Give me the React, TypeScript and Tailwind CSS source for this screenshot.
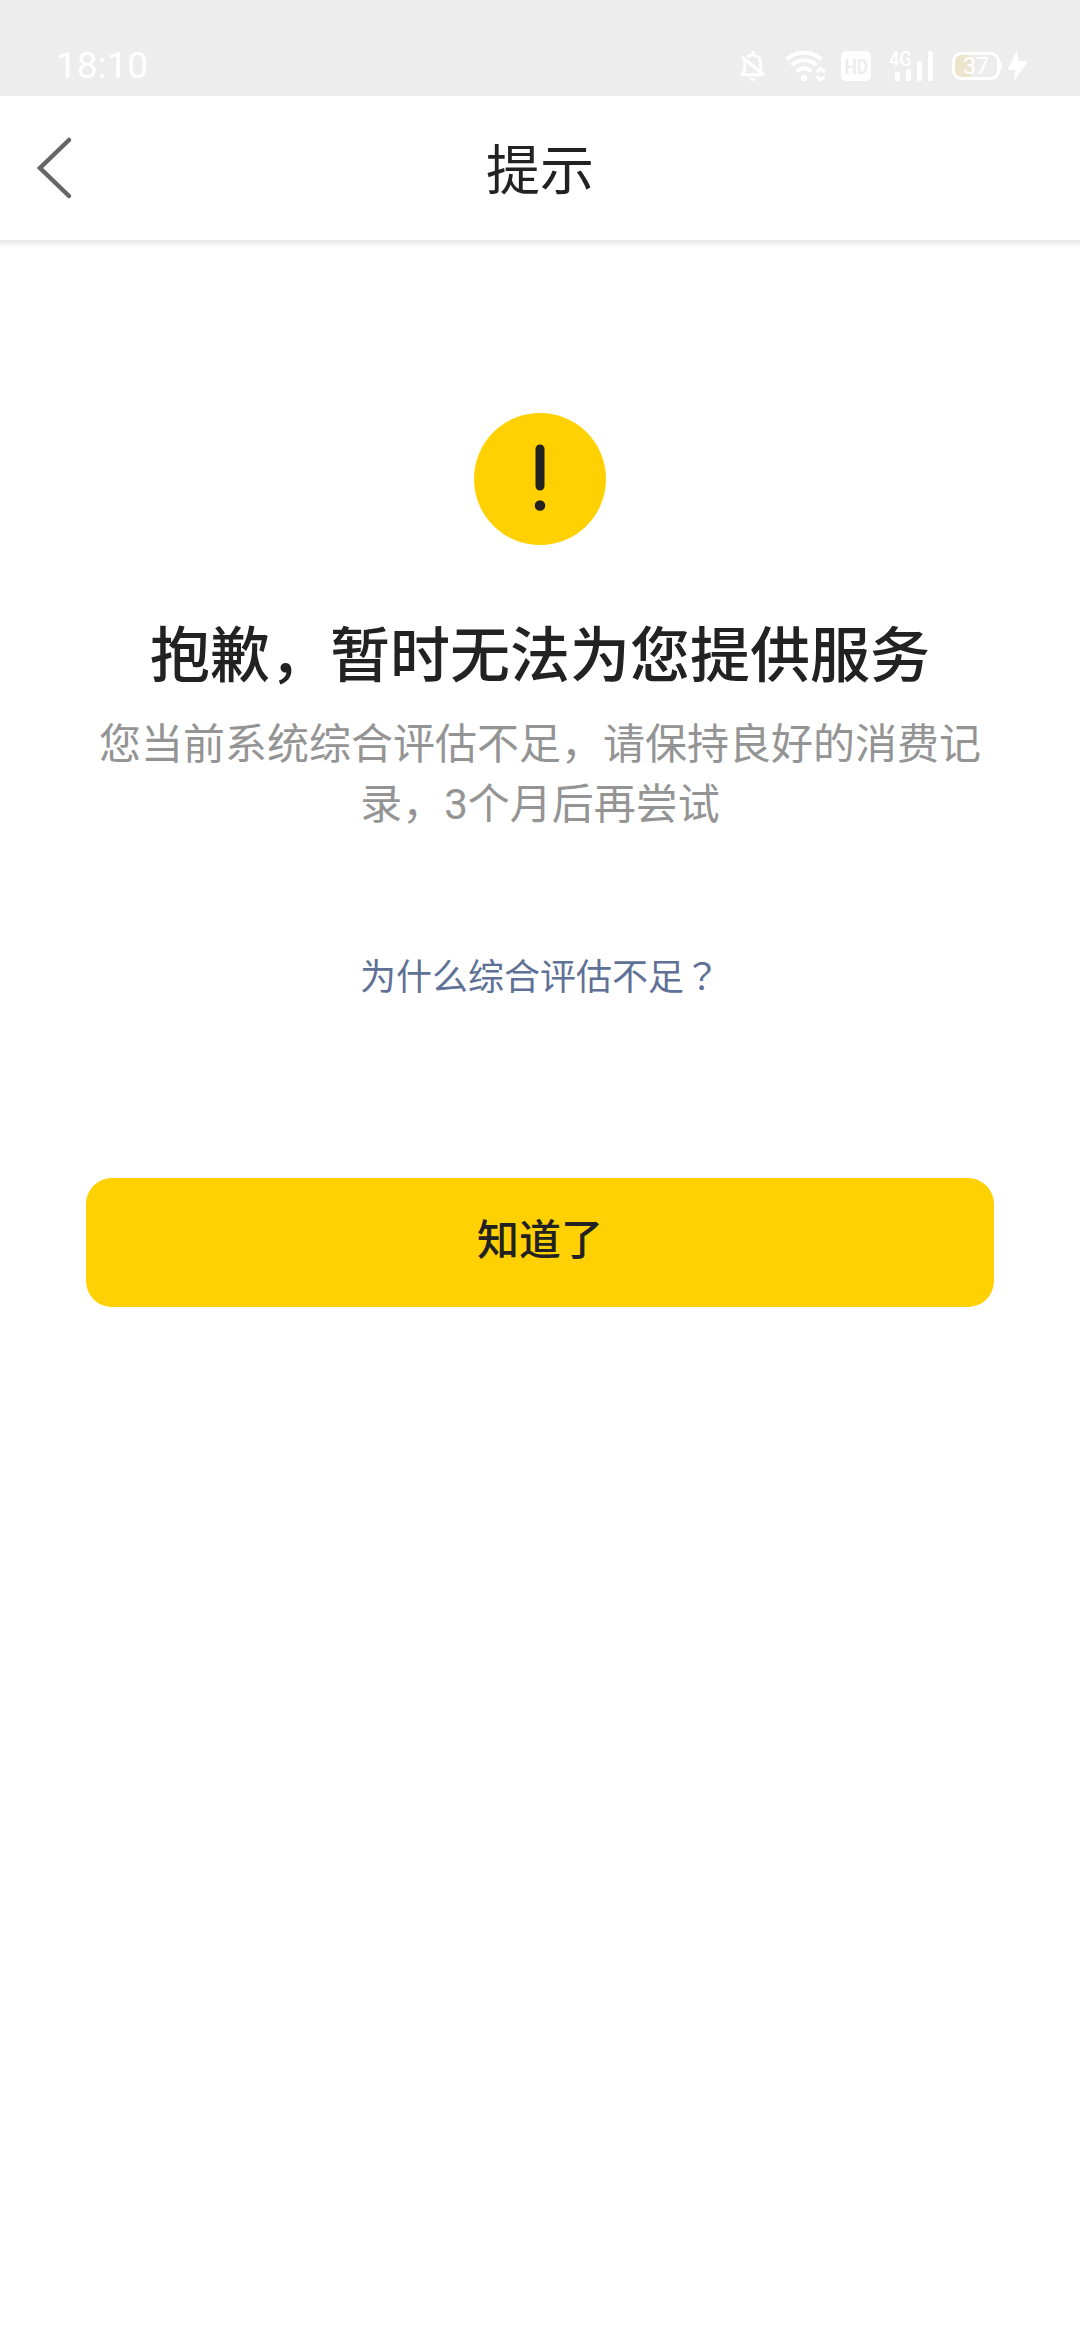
function BellOffIcon() {
    return (
        <svg className="h-[30px] w-[25px]" viewBox="0 0 25 30" fill="none" stroke="#fff" strokeWidth="3">
            <path d="M7 6.500C8.800 4.500 10.500 4 12.800 4c4.500 0 8 3.200 8 8v7" />
            <path d="M4.800 10v9.500L2 23v.8h19" />
            <path d="M2 6l22 18" />
            <path d="M13 0v4" />
            <path d="M9.500 27H16c-.5 2-1.800 3-3.200 3s-2.800-1-3.300-3z" fill="#fff" stroke="none" />
        </svg>
    );
}

function WifiIcon() {
    return (
        <svg className="h-[30px] w-[40px]" viewBox="0 0 40 30" fill="none" stroke="#fff" strokeWidth="4">
            <path d="M1.500 8C12.500-.3 25.500-.3 36.500 8" />
            <path d="M6.500 14.300c8-6.600 17-6.600 25 0" />
            <path d="M11.500 20.500c5-4.400 10-4.400 15 0" />
            <circle cx="19" cy="27" r="3.2" fill="#fff" stroke="none" />
            <path d="M31.800 21.200l4-3.700 4 3.700M31.800 25.300l4 3.700 4-3.700" strokeWidth="3" />
        </svg>
    );
}

function HdIcon() {
    return (
        <svg className="size-[30px] overflow-visible" viewBox="0 0 30 30">
            <rect width="30" height="30" rx="5" fill="#fff" />
            <text x="3.5" y="22.5" fontSize="21" fontWeight="700" fontFamily="Roboto, sans-serif" textLength="23.5" lengthAdjust="spacingAndGlyphs" fill="#ededed">HD</text>
        </svg>
    );
}

function SignalIcon() {
    return (
        <svg className="h-[30px] w-[44px] overflow-visible" viewBox="0 0 44 30" fill="#fff">
            <text x="0" y="14.5" fontSize="19.5" fontWeight="500" fontFamily="Roboto, sans-serif" textLength="22.5" lengthAdjust="spacingAndGlyphs">4G</text>
            <rect x="6" y="20.5" width="5" height="9.5" rx="1.5" />
            <rect x="17" y="18" width="5" height="12" rx="1.5" />
            <rect x="28" y="10" width="5" height="20" rx="1.5" />
            <rect x="39" y="0" width="5" height="30" rx="1.5" />
        </svg>
    );
}

function BatteryIcon() {
    return (
        <svg className="h-[30px] w-[50px] overflow-visible" viewBox="0 0 50 30">
            <path d="M9.500 3H19v24H9.500A7 7 0 0 1 3 20V10a7 7 0 0 1 6.500-7z" fill="#ece5cc" />
            <rect x="1.5" y="2.5" width="45" height="25" rx="8" fill="none" stroke="#fff" strokeWidth="3" />
            <path d="M47 10c4 1.500 4 9 0 10.500z" fill="#fff" />
            <text x="24" y="23" fontSize="23" fontFamily="Roboto, sans-serif" textAnchor="middle" fill="#fff">37</text>
        </svg>
    );
}

function BoltIcon() {
    return (
        <svg className="h-[30px] w-[19px]" viewBox="0 0 19 30" fill="#fff">
            <path d="M9 0L0 17.500c-.3.800 0 1.500 1 1.500h6.500L6 30l13-18.500c.3-.800 0-1.500-1-1.500h-7.500z" />
        </svg>
    );
}

function StatusBar() {
    return (
        <div className="flex h-24 items-start justify-between bg-[#ededed] pl-14 pr-[53px] text-white">
            <span className="mt-[46px] font-[Roboto] text-[37px] leading-[40px]">18:10</span>
            <div className="mt-[51px] flex">
                <BellOffIcon />
                <div className="ml-5"><WifiIcon /></div>
                <div className="ml-4"><HdIcon /></div>
                <div className="ml-[18px]"><SignalIcon /></div>
                <div className="ml-[19px]"><BatteryIcon /></div>
                <div className="ml-[6px]"><BoltIcon /></div>
            </div>
        </div>
    );
}

function Header() {
    return (
        <header className="grid h-36 grid-cols-[1fr_auto_1fr] items-center bg-white">
            <button className="ml-9 w-10">
                <svg className="h-[64px] w-[40px]" viewBox="0 0 40 64" fill="none" stroke="#666" strokeWidth="4.5" strokeLinecap="round">
                    <path d="M33 4L4 32l29 28" />
                </svg>
            </button>
            <h1 className="pb-0.5 text-[54px] leading-[80px]">提示</h1>
        </header>
    );
}

export default function App() {
    return (
        <div className="flex h-[2340px] w-[1080px] flex-col bg-white font-['Noto_Sans_CJK_SC',sans-serif] text-[#222]">
            <StatusBar />
            <Header />
            <div className="h-2 bg-linear-to-b from-[#e8e8e8] to-white" />

            <main className="flex flex-col items-center px-[86px] pt-[165px] text-center">
                <svg className="size-[132px]" viewBox="0 0 132 132">
                    <circle cx="66" cy="66" r="66" fill="#ffd103" />
                    <rect x="61.5" y="31.5" width="9" height="46" rx="4.5" fill="#222" />
                    <circle cx="66" cy="92.5" r="5.3" fill="#222" />
                </svg>
                <h2 className="mt-[61px] text-[60px] font-medium leading-[90px]">抱歉，暂时无法为您提供服务</h2>
                <p className="mt-[15px] text-[42px] leading-[60px] text-[#949494]">
                    您当前系统综合评估不足，请保持良好的消费记
                    <br />
                    录，<span className="font-[Roboto] leading-none">3</span>个月后再尝试
                </p>
                <a className="mt-[113px] text-[36px] leading-[60px] text-[#5f7197]">
                    为什么综合评估不足
                    {/* the TC face centres the question mark in its box */}
                    <span className="font-['Noto_Sans_CJK_TC'] leading-none">？</span>
                </a>
                <button className="mt-[174px] h-[129px] w-full rounded-[26px] bg-[#ffd103] pb-3 text-[42px] font-medium">
                    知道了
                </button>
            </main>
        </div>
    );
}
